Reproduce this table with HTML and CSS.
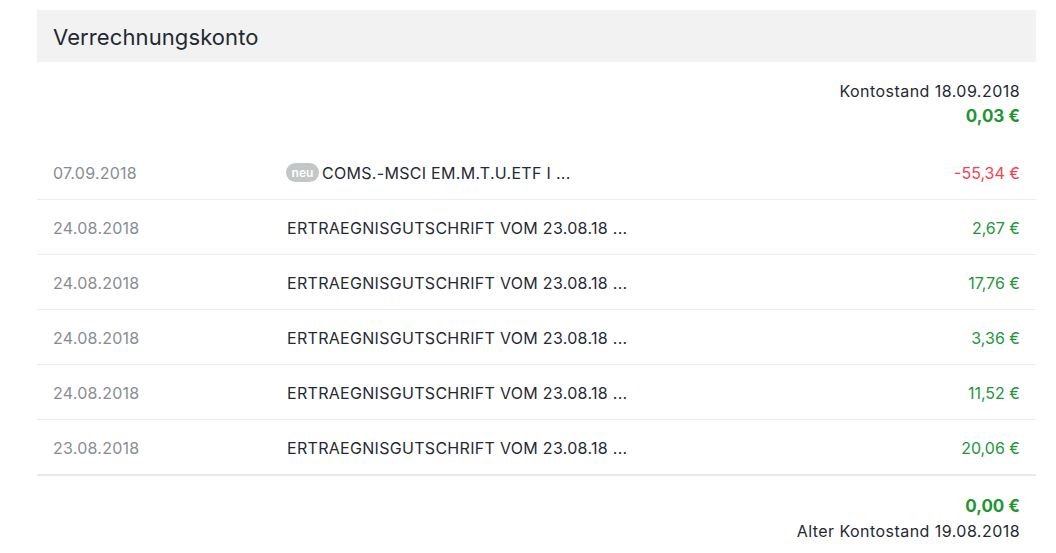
FILE: index.html
```html
<!DOCTYPE html>
<html lang="de">
<head>
<meta charset="utf-8">
<title>Verrechnungskonto</title>
<link rel="stylesheet" href="styles.css">
</head>
<body>
<section class="account">
  <header class="account-header">
    <h1 class="account-title">Verrechnungskonto</h1>
  </header>
  <div class="balance balance-top">
    <div class="balance-label">Kontostand 18.09.2018</div>
    <div class="balance-value">0,03 €</div>
  </div>
  <ul class="tx-list">
    <li class="tx">
      <span class="tx-date">07.09.2018</span>
      <span class="tx-desc"><span class="badge">neu</span>COMS.-MSCI EM.M.T.U.ETF I ...</span>
      <span class="tx-amount neg">-55,34 €</span>
    </li>
    <li class="tx">
      <span class="tx-date">24.08.2018</span>
      <span class="tx-desc">ERTRAEGNISGUTSCHRIFT VOM 23.08.18 ...</span>
      <span class="tx-amount pos">2,67 €</span>
    </li>
    <li class="tx">
      <span class="tx-date">24.08.2018</span>
      <span class="tx-desc">ERTRAEGNISGUTSCHRIFT VOM 23.08.18 ...</span>
      <span class="tx-amount pos">17,76 €</span>
    </li>
    <li class="tx">
      <span class="tx-date">24.08.2018</span>
      <span class="tx-desc">ERTRAEGNISGUTSCHRIFT VOM 23.08.18 ...</span>
      <span class="tx-amount pos">3,36 €</span>
    </li>
    <li class="tx">
      <span class="tx-date">24.08.2018</span>
      <span class="tx-desc">ERTRAEGNISGUTSCHRIFT VOM 23.08.18 ...</span>
      <span class="tx-amount pos">11,52 €</span>
    </li>
    <li class="tx tx-last">
      <span class="tx-date">23.08.2018</span>
      <span class="tx-desc">ERTRAEGNISGUTSCHRIFT VOM 23.08.18 ...</span>
      <span class="tx-amount pos">20,06 €</span>
    </li>
  </ul>
  <div class="balance balance-bottom">
    <div class="balance-value">0,00 €</div>
    <div class="balance-label">Alter Kontostand 19.08.2018</div>
  </div>
</section>
</body>
</html>
```
FILE: styles.css
```css
* { box-sizing: border-box; }
html, body { margin: 0; padding: 0; background: #fff; }
body {
  font-family: Inter, "Open Sans", "Liberation Sans", sans-serif;
  color: #1f2a33;
  font-size: 16px;
}
.account {
  width: 999px;
  margin: 10px 0 0 37px;
}
.account-header {
  background: #f2f2f2;
  height: 52px;
  display: flex;
  align-items: center;
  padding: 0 16px;
}
.account-title {
  margin: 0;
  font-size: 22px;
  font-weight: 400;
  color: #1f2a33;
  letter-spacing: 0.1px;
  padding-top: 2px;
}
.balance {
  display: flex;
  flex-direction: column;
  align-items: flex-end;
  padding: 0 16px;
  line-height: 25px;
}
.balance-top { padding-top: 17px; padding-bottom: 16px; }
.balance-bottom { padding-top: 18px; }
.balance-label { font-size: 16px; letter-spacing: 0.45px; color: #1f2a33; }
.balance-value { font-size: 17px; font-weight: 700; color: #1e9632; }
.tx-list { list-style: none; margin: 0; padding: 0; }
.tx {
  display: grid;
  grid-template-columns: 233px 1fr auto;
  align-items: center;
  height: 55px;
  padding: 1px 16px 0;
  border-bottom: 1px solid #ececec;
}
.tx-last { border-bottom: 2px solid #e8e8e8; height: 56px; }
.tx-date { color: #878d92; letter-spacing: 0.25px; }
.tx-desc { color: #1f2a33; display: flex; align-items: center; letter-spacing: 0.3px; padding-left: 1px; }
.badge {
  display: inline-flex;
  align-items: center;
  justify-content: center;
  height: 19px;
  width: 33px;
  margin: 0 3px 0 -1px;
  border-radius: 10px;
  background: #c3c6c7;
  color: #fff;
  font-size: 12px;
  font-weight: 600;
  letter-spacing: 0;
}
.tx-amount { text-align: right; }
.neg { color: #f2434f; }
.pos { color: #23963a; }
```
